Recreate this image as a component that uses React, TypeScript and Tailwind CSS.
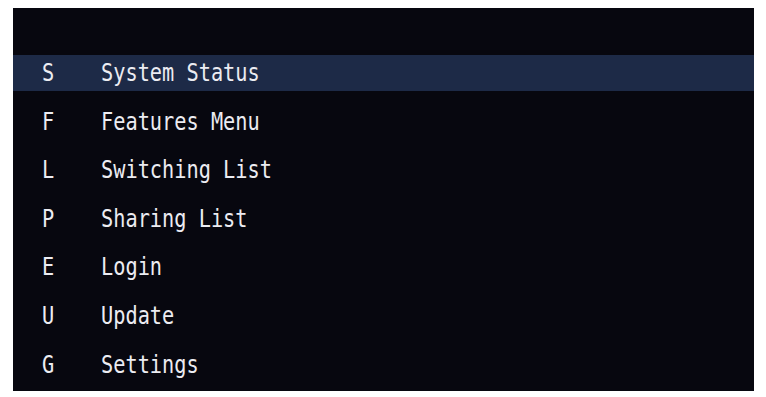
import React from "react";

const items: [string, string][] = [
  ["S", "System Status"],
  ["F", "Features Menu"],
  ["L", "Switching List"],
  ["P", "Sharing List"],
  ["E", "Login"],
  ["U", "Update"],
  ["G", "Settings"],
];

export default function App() {
  return (
    <div className="w-[766px] h-[397px] bg-white pt-[8px] pl-[13px]">
      <div className="w-[741px] h-[383px] bg-[#07070f] pt-[47px] flex flex-col gap-[12.6px]">
        {items.map(([k, label], i) => (
          <div
            key={k}
            className={`h-[36px] flex items-center text-[24px] text-[#ececf2] ${i === 0 ? "bg-[#1d2a47]" : ""}`}
            style={{ fontFamily: '"DejaVu Sans Mono", "Liberation Mono", monospace' }}
          >
            <span className="w-[29px] shrink-0" />
            <span className="w-[59px] shrink-0 inline-block scale-x-[0.845] origin-left leading-none">{k}</span>
            <span className="inline-block scale-x-[0.845] origin-left leading-none whitespace-nowrap">{label}</span>
          </div>
        ))}
      </div>
    </div>
  );
}
